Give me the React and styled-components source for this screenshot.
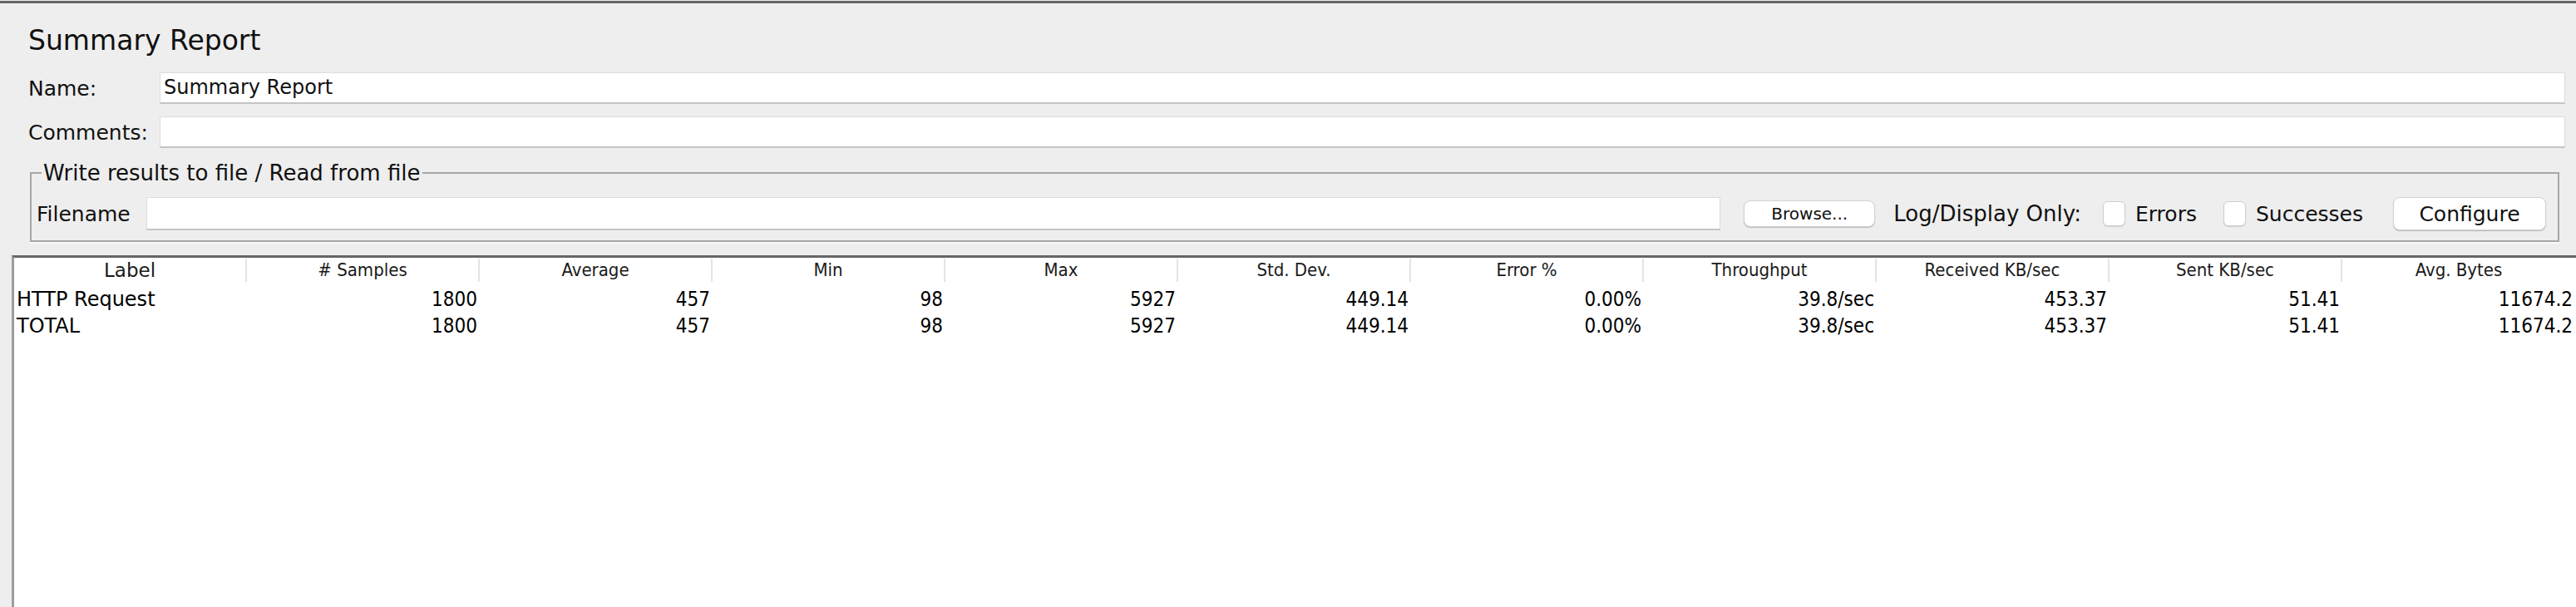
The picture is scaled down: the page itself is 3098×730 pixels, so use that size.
import styled, { createGlobalStyle } from 'styled-components';

const GlobalStyle = createGlobalStyle`
  html, body {
    margin: 0;
    padding: 0;
    background: #eeeeee;
  }
  body {
    font-family: "DejaVu Sans", "Noto Sans", sans-serif;
    color: #111;
  }
`;

const columns = [
  'Label', '# Samples', 'Average', 'Min', 'Max', 'Std. Dev.', 'Error %',
  'Throughput', 'Received KB/sec', 'Sent KB/sec', 'Avg. Bytes',
];

const rows = [
  ['HTTP Request', '1800', '457', '98', '5927', '449.14', '0.00%', '39.8/sec', '453.37', '51.41', '11674.2'],
  ['TOTAL', '1800', '457', '98', '5927', '449.14', '0.00%', '39.8/sec', '453.37', '51.41', '11674.2'],
];

export default function App() {
  return (
    <Page>
      <GlobalStyle />
      <TopRule />

      <Header>
        <Title>Summary Report</Title>
        <FormRow first>
          <FieldLabel>Name:</FieldLabel>
          <TextField>Summary Report</TextField>
        </FormRow>
        <FormRow>
          <FieldLabel>Comments:</FieldLabel>
          <TextField />
        </FormRow>
      </Header>

      <FileBox>
        <Legend>Write results to file / Read from file</Legend>
        <FileRow>
          <FileLabel>Filename</FileLabel>
          <FileField />
          <Button small>Browse...</Button>
          <Caption>Log/Display Only:</Caption>
          <Check gap={26} />
          <CheckText>Errors</CheckText>
          <Check gap={32} />
          <CheckText>Successes</CheckText>
          <Button>Configure</Button>
        </FileRow>
      </FileBox>

      <Table>
        <HeadRow>
          {columns.map((c, i) => (
            <HeadCell key={c} first={i === 0} last={i === columns.length - 1}>{c}</HeadCell>
          ))}
        </HeadRow>
        {rows.map((r, ri) => (
          <DataRow key={ri}>
            {r.map((v, i) => (
              <Cell key={i} first={i === 0}>{v}</Cell>
            ))}
          </DataRow>
        ))}
      </Table>
    </Page>
  );
}

const Page = styled.div`
  width: 3098px;
  height: 730px;
  overflow: hidden;
  display: flex;
  flex-direction: column;
  background: #eeeeee;
`;

const TopRule = styled.div`
  height: 3px;
  margin-top: 1px;
  background: #666;
  flex-shrink: 0;
`;

const Header = styled.div`
  padding: 0 13px 0 34px;
`;

const Title = styled.div`
  font-size: 33px;
  line-height: 40px;
  margin-top: 25px;
  color: #111;
`;

const FormRow = styled.div`
  display: flex;
  align-items: center;
  height: 38px;
  margin-top: ${p => (p.first ? '18px' : '15px')};
`;

const FieldLabel = styled.div`
  width: 158px;
  flex-shrink: 0;
  font-size: 25px;
`;

const TextField = styled.div`
  flex: 1;
  height: 38px;
  box-sizing: border-box;
  background: #fff;
  border: 1px solid #dcdcdc;
  border-bottom: 2px solid #c4c4c4;
  font-size: 24px;
  line-height: 34px;
  padding-left: 4px;
`;

const FileBox = styled.fieldset`
  margin: 16px 20px 0 36px;
  padding: 0 6px 10px 6px;
  border: 2px solid #a6a6a6;
  box-shadow: 0 2px 0 #fafafa;
`;

const Legend = styled.legend`
  margin-left: 6px;
  padding: 0 2px;
  font-size: 26px;
  line-height: 28px;
`;

const FileRow = styled.div`
  display: flex;
  align-items: center;
  height: 44px;
  margin-top: 13px;
`;

const FileLabel = styled.div`
  width: 132px;
  flex-shrink: 0;
  font-size: 25px;
`;

const FileField = styled.div`
  flex: 1;
  height: 40px;
  box-sizing: border-box;
  background: #fff;
  border: 1px solid #dcdcdc;
  border-bottom: 2px solid #c4c4c4;
`;

const Button = styled.div`
  flex-shrink: 0;
  width: ${p => (p.small ? '158px' : '184px')};
  height: ${p => (p.small ? '32px' : '40px')};
  margin-left: ${p => (p.small ? '28px' : '36px')};
  margin-right: ${p => (p.small ? '0' : '8px')};
  box-sizing: border-box;
  display: flex;
  align-items: center;
  justify-content: center;
  background: #fff;
  border: 1px solid #d2d2d2;
  border-radius: 8px;
  box-shadow: 0 1px 1px rgba(0, 0, 0, 0.22);
  font-size: ${p => (p.small ? '20px' : '25px')};
`;

const Caption = styled.div`
  margin-left: 22px;
  font-size: 26px;
  flex-shrink: 0;
`;

const Check = styled.div`
  flex-shrink: 0;
  width: 27px;
  height: 30px;
  box-sizing: border-box;
  margin-left: ${p => p.gap}px;
  background: #fff;
  border: 1px solid #cdcdcd;
  border-radius: 6px;
  box-shadow: 0 1px 1px rgba(0, 0, 0, 0.12);
`;

const CheckText = styled.div`
  margin-left: 12px;
  font-size: 25px;
  flex-shrink: 0;
`;

const Table = styled.div`
  flex: 1;
  margin: 16px 0 0 14px;
  width: 3100px;
  background: #fff;
  border-left: 3px solid #9c9c9c;
  border-top: 3px solid #666;
`;

const HeadRow = styled.div`
  display: grid;
  grid-template-columns: repeat(11, 280px);
  padding: 1px 0 5px;
`;

const HeadCell = styled.div`
  height: 28px;
  line-height: 28px;
  text-align: center;
  font-size: ${p => (p.first ? '23px' : '22px')};
  font-family: ${p => (p.first ? '"DejaVu Sans"' : '"DejaVu Sans Condensed", "DejaVu Sans"')}, sans-serif;
  font-stretch: ${p => (p.first ? 'normal' : 'condensed')};
  color: #1a1a1a;
  border-right: ${p => (p.last ? 'none' : '2px solid #e4e4e4')};
  white-space: nowrap;
`;

const DataRow = styled.div`
  display: grid;
  grid-template-columns: repeat(11, 280px);
  height: 32px;
`;

const Cell = styled.div`
  line-height: 32px;
  font-size: 24px;
  text-align: ${p => (p.first ? 'left' : 'right')};
  padding: ${p => (p.first ? '0 0 0 3px' : '0 3px 0 0')};
  font-family: ${p => (p.first ? '"DejaVu Sans"' : '"DejaVu Sans Condensed", "DejaVu Sans"')}, sans-serif;
  font-stretch: ${p => (p.first ? 'normal' : 'condensed')};
  white-space: nowrap;
  color: #000;
`;
